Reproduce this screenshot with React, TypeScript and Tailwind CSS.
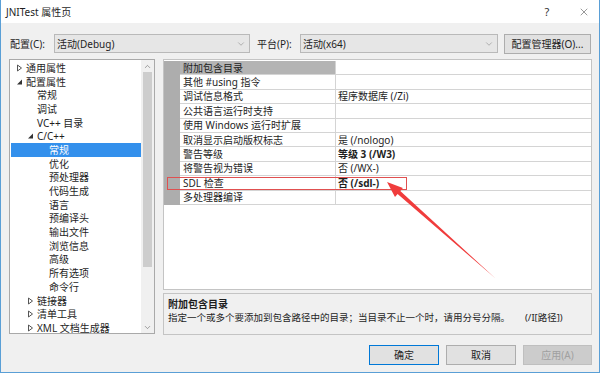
import { ChevronDown, ChevronUp, X } from 'lucide-react';

type TreeItem = {
  label: string;
  level: number;
  arrow?: 'open' | 'closed';
  selected?: boolean;
};

const treeItems: TreeItem[] = [
  { label: '通用属性', level: 0, arrow: 'closed' },
  { label: '配置属性', level: 0, arrow: 'open' },
  { label: '常规', level: 1 },
  { label: '调试', level: 1 },
  { label: 'VC++ 目录', level: 1 },
  { label: 'C/C++', level: 1, arrow: 'open' },
  { label: '常规', level: 2, selected: true },
  { label: '优化', level: 2 },
  { label: '预处理器', level: 2 },
  { label: '代码生成', level: 2 },
  { label: '语言', level: 2 },
  { label: '预编译头', level: 2 },
  { label: '输出文件', level: 2 },
  { label: '浏览信息', level: 2 },
  { label: '高级', level: 2 },
  { label: '所有选项', level: 2 },
  { label: '命令行', level: 2 },
  { label: '链接器', level: 1, arrow: 'closed' },
  { label: '清单工具', level: 1, arrow: 'closed' },
  { label: 'XML 文档生成器', level: 1, arrow: 'closed' },
];

type Prop = { name: string; value?: string; bold?: boolean };

const props: Prop[] = [
  { name: '附加包含目录' },
  { name: '其他 #using 指令' },
  { name: '调试信息格式', value: '程序数据库 (/Zi)' },
  { name: '公共语言运行时支持' },
  { name: '使用 Windows 运行时扩展' },
  { name: '取消显示启动版权标志', value: '是 (/nologo)' },
  { name: '警告等级', value: '等级 3 (/W3)', bold: true },
  { name: '将警告视为错误', value: '否 (/WX-)' },
  { name: 'SDL 检查', value: '否 (/sdl-)', bold: true },
  { name: '多处理器编译' },
];

const levelPad = ['pl-[5px]', 'pl-[16px]', 'pl-[28px]'];

function TreeArrow({ kind }: { kind?: 'open' | 'closed' }) {
  return (
    <span className="w-[10px] h-[8px] flex items-center">
      {kind === 'closed' && (
        <svg width="7" height="8" viewBox="0 0 7 8">
          <polygon points="1.5,1 5.5,4 1.5,7" fill="none" stroke="#555" strokeWidth="1" />
        </svg>
      )}
      {kind === 'open' && (
        <svg width="7" height="8" viewBox="0 0 7 8">
          <polygon points="6,1.5 6,6.5 1,6.5" fill="#333" />
        </svg>
      )}
    </span>
  );
}

function Combo({ value, width }: { value: string; width: string }) {
  return (
    <div className={`${width} h-[19px] flex items-center bg-[#e6e6e6] border border-[#b9b9b9] pl-[2px] pr-[3px]`}>
      <span className="flex-1">{value}</span>
      <ChevronDown size={10} strokeWidth={1.3} className="text-[#808080]" />
    </div>
  );
}

export default function App() {
  return (
    <div className="relative w-[600px] h-[373px] flex flex-col overflow-hidden bg-[#f0f0f0] border-x border-b border-[#5a9fd6] font-['Noto_Sans','Noto_Sans_CJK_SC',sans-serif] text-[10px] leading-none text-[#1e1e1e]">
      {/* title bar */}
      <div className="h-[23px] shrink-0 bg-white flex items-center pl-[5px]">
        <span className="text-[10px]">JNITest 属性页</span>
        <span className="flex-1" />
        <span className="w-[14px] text-center text-[11px] text-[#333]">?</span>
        <span className="w-[14px] ml-[23px] mr-[8px] flex justify-center">
          <X size={12} strokeWidth={1} className="text-[#333]" />
        </span>
      </div>

      <div className="flex-1 flex flex-col pl-[8px] pr-[7px]">
        {/* config row */}
        <div className="mt-[11px] h-[19px] flex items-center">
          <span className="w-[45px] pl-[1px]">配置(C):</span>
          <Combo value="活动(Debug)" width="w-[196px]" />
          <span className="w-[50px] pl-[7px]">平台(P):</span>
          <Combo value="活动(x64)" width="w-[198px]" />
          <button className="ml-[6px] w-[87px] h-[20px] bg-[#e1e1e1] border border-[#adadad] text-center">
            配置管理器(O)...
          </button>
        </div>

        {/* main area */}
        <div className="mt-[6px] flex gap-[8px]">
          {/* tree */}
          <div className="w-[146px] h-[275px] bg-white border border-[#a9a9a9] flex">
            <div className="flex-1 pl-[1px] pt-[1px]">
              {treeItems.map((item, i) => (
                <div
                  key={i}
                  className={`h-[13.7px] flex items-center ${levelPad[item.level]} ${item.selected ? 'bg-[#3390ec] text-white' : ''}`}
                >
                  <TreeArrow kind={item.arrow} />
                  <span>{item.label}</span>
                </div>
              ))}
            </div>
            <div className="w-[13px] bg-[#f0f0f0] flex flex-col items-center">
              <div className="h-[12px] flex items-center">
                <ChevronUp size={9} strokeWidth={1.5} className="text-[#606060]" />
              </div>
              <div className="w-[9px] h-[195px] bg-[#cdcdcd]" />
              <div className="flex-1" />
              <div className="h-[12px] flex items-center">
                <ChevronDown size={9} strokeWidth={1.5} className="text-[#606060]" />
              </div>
            </div>
          </div>

          {/* property grid + description */}
          <div className="flex-1 flex flex-col">
            <div className="relative h-[231px] bg-white border border-[#c4c4c4] pt-[1px]">
              {props.map((p, i) => (
                <div key={i} className="h-[14.4px] flex">
                  <div className="w-[16px] bg-[#adadad]" />
                  <div
                    className={`w-[156px] flex items-center pl-[3px] border-r border-b border-[#d4d4d4] ${i === 0 ? 'bg-[#b4b4b4]' : ''}`}
                  >
                    {p.name}
                  </div>
                  <div className={`flex-1 flex items-center pl-[2px] border-b border-[#d4d4d4] ${p.bold ? 'font-bold' : ''}`}>
                    {p.value}
                  </div>
                </div>
              ))}
              <div className="absolute left-[3px] top-[117px] w-[240px] h-[13px] border border-[#e05050]" />
            </div>

            <div className="mt-[3px] h-[42px] border border-[#c4c4c4] bg-[#f0f0f0] pl-[4px] pt-[3px]">
              <div className="h-[14px] flex items-center font-bold">附加包含目录</div>
              <div className="h-[14px] flex items-center text-[9.5px]">
                <span className="w-[357px]">指定一个或多个要添加到包含路径中的目录；当目录不止一个时，请用分号分隔。</span>
                <span>(/I[路径])</span>
              </div>
            </div>
          </div>
        </div>

        {/* buttons */}
        <div className="mt-[10px] h-[20px] flex justify-end gap-[7px]">
          <button className="w-[70px] h-[20px] bg-[#e1e1e1] border border-[#0078d7]">确定</button>
          <button className="w-[70px] h-[20px] bg-[#e1e1e1] border border-[#adadad]">取消</button>
          <button className="w-[69px] h-[20px] bg-[#cccccc] border border-[#bfbfbf] text-[#a0a0a0]">应用(A)</button>
        </div>
      </div>

      {/* annotation arrow */}
      <svg className="absolute left-[-1px] top-0 pointer-events-none" width="600" height="373">
        <polygon
          points="387,182 402.9,188.1 400.3,191.1 495,278 397.6,194.1 395,197.1"
          fill="#f03c3c"
        />
      </svg>
    </div>
  );
}
